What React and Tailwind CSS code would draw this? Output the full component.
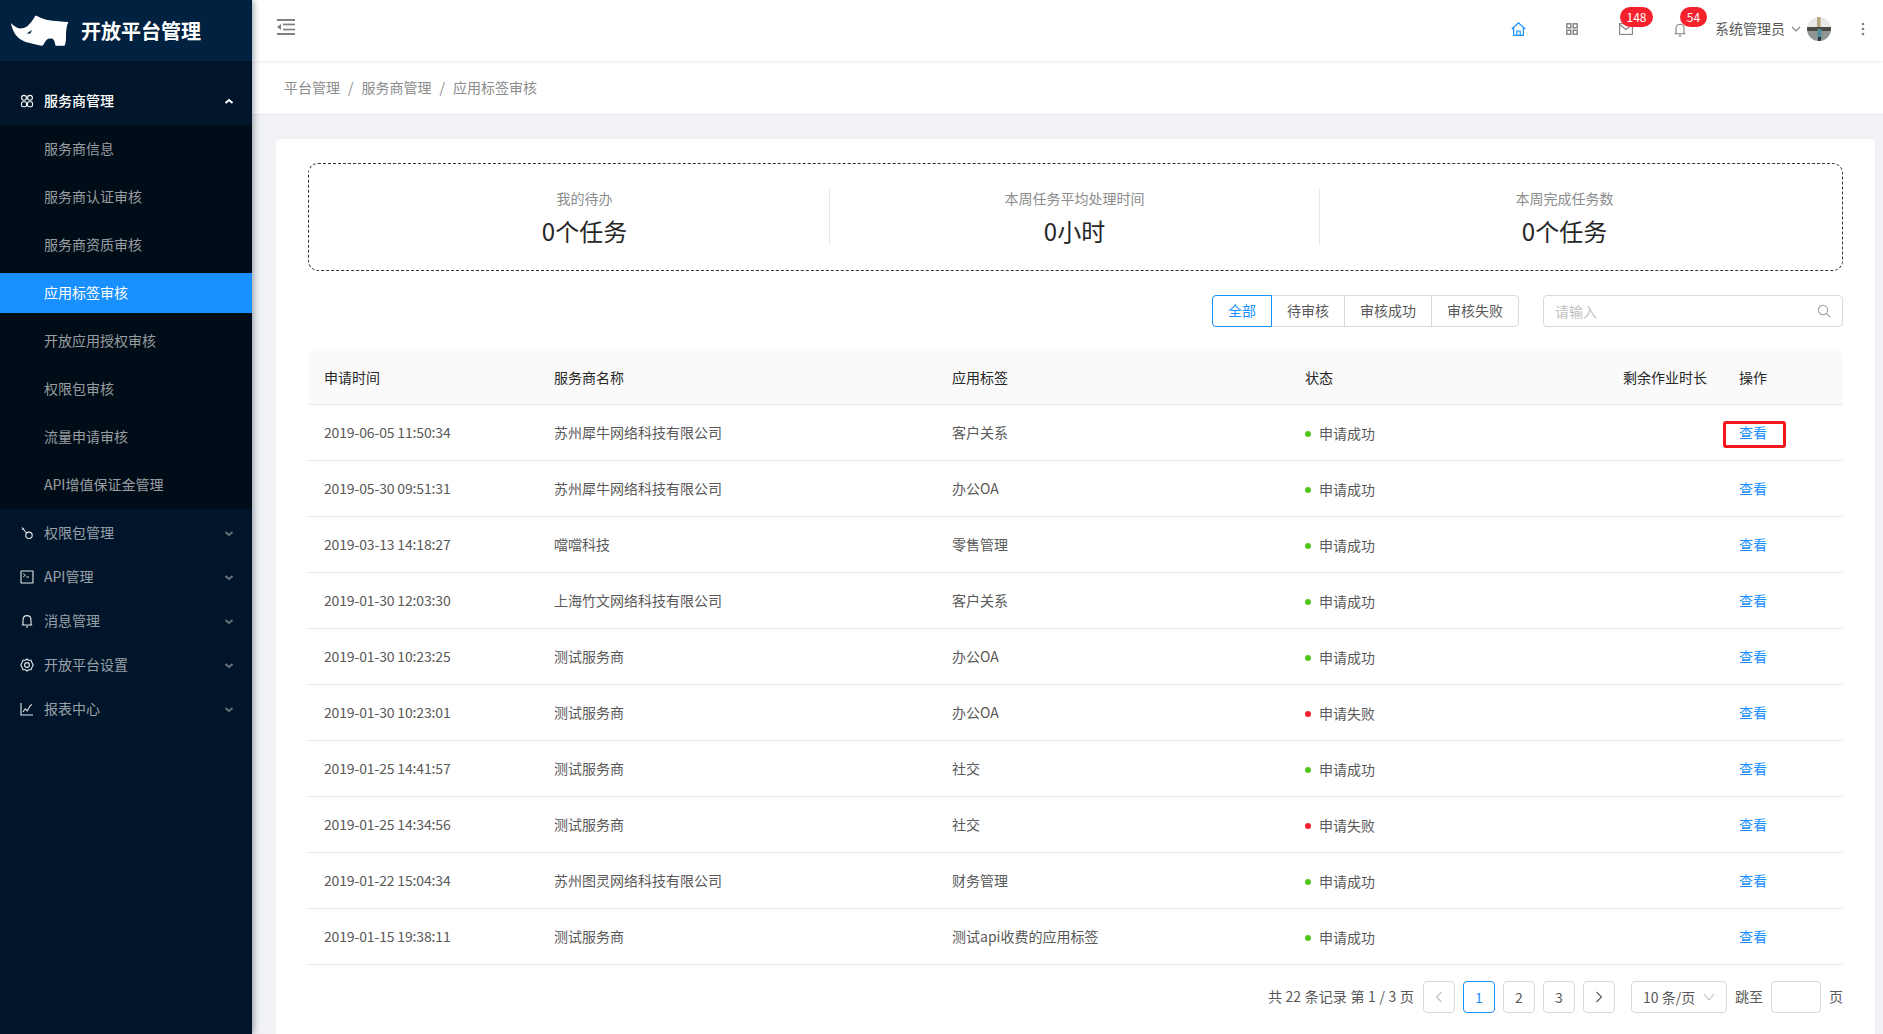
import React from "react";

const sub = ["服务商信息", "服务商认证审核", "服务商资质审核", "应用标签审核", "开放应用授权审核", "权限包审核", "流量申请审核", "API增值保证金管理"];

const rows = [
  ["2019-06-05 11:50:34", "苏州犀牛网络科技有限公司", "客户关系", true],
  ["2019-05-30 09:51:31", "苏州犀牛网络科技有限公司", "办公OA", true],
  ["2019-03-13 14:18:27", "噹噹科技", "零售管理", true],
  ["2019-01-30 12:03:30", "上海竹文网络科技有限公司", "客户关系", true],
  ["2019-01-30 10:23:25", "测试服务商", "办公OA", true],
  ["2019-01-30 10:23:01", "测试服务商", "办公OA", false],
  ["2019-01-25 14:41:57", "测试服务商", "社交", true],
  ["2019-01-25 14:34:56", "测试服务商", "社交", false],
  ["2019-01-22 15:04:34", "苏州图灵网络科技有限公司", "财务管理", true],
  ["2019-01-15 19:38:11", "测试服务商", "测试api收费的应用标签", true],
];

const Ico = ({ children, className = "", size = 14, vb = "0 0 14 14" }) => (
  <svg width={size} height={size} viewBox={vb} fill="none" stroke="currentColor" strokeWidth="1.1" className={className}>
    {children}
  </svg>
);

const Chevron = ({ up, className = "" }) => (
  <svg width="10" height="7" viewBox="0 0 10 7" fill="none" stroke="currentColor" strokeWidth="2" className={className}>
    <path d={up ? "M1.5 5 L5 2 L8.5 5" : "M1.5 2 L5 5 L8.5 2"} />
  </svg>
);

const Logo = () => (
  <svg width="58" height="33" viewBox="11 14 58 33" className="shrink-0">
    <path
      fill="#fff"
      d="M11 23 C13 25 16 28 20 28.5 C23 28.5 25 27.5 27 26.5 C30 24 33 20 35.5 15.5 C38 16.5 41 18 44 19 C48 20.5 54 21 68.5 22 C66.5 25 66 32 66 37 C66 41 65.5 44 64.5 45.8 L55.5 45.8 C55 42 54 39 51.5 38.5 C48 38 46 40 45 42 C44 44 43.5 45 42 45.8 C38 45 34 44.5 29 42.8 C22 41.5 16 37 13.5 31 C12 28 11.3 25 11 23 Z"
    />
    <path fill="#002140" d="M26.5 33.5 L32 30 L30.5 33.5 Z" />
  </svg>
);

const GroupIcons = {
  apps: (
    <Ico>
      <circle cx="4" cy="3.8" r="2.4" />
      <circle cx="10" cy="3.8" r="2.4" />
      <rect x="1.5" y="7.8" width="5" height="5" rx="1.6" />
      <rect x="7.5" y="7.8" width="5" height="5" rx="1.6" />
    </Ico>
  ),
  key: (
    <Ico>
      <circle cx="9" cy="9.3" r="3.2" />
      <path d="M6.6 7 L2 1.5 M2.2 3.6 L3.8 2.4" />
    </Ico>
  ),
  code: (
    <Ico>
      <rect x="1" y="1" width="12" height="12" rx="0.6" />
      <path d="M3.2 3.6 L5.3 5.3 L3.2 7 M6.3 7 L9 7" strokeWidth="0.9" />
    </Ico>
  ),
  bell: (
    <Ico>
      <path d="M3 11 L3 6 C3 3.4 4.8 1.6 7 1.6 C9.2 1.6 11 3.4 11 6 L11 11 M1.8 11 L12.2 11" />
      <circle cx="7" cy="12.8" r="0.9" fill="currentColor" stroke="none" />
    </Ico>
  ),
  gear: (
    <Ico>
      <path d="M7 1 L8.6 2.2 L11 2.2 L11.9 4.4 L13.2 7 L11.9 9.6 L11 11.8 L8.6 11.8 L7 13 L5.4 11.8 L3 11.8 L2.1 9.6 L0.8 7 L2.1 4.4 L3 2.2 L5.4 2.2 Z" />
      <circle cx="7" cy="7" r="2.4" />
    </Ico>
  ),
  chart: (
    <Ico>
      <path d="M1 1 L1 13 L13 13" />
      <path d="M3 10 L5.3 6.8 L7.2 8.8 L10 4 L11.8 2.4" />
    </Ico>
  ),
};

function Sidebar() {
  const groups = [
    ["key", "权限包管理"],
    ["code", "API管理"],
    ["bell", "消息管理"],
    ["gear", "开放平台设置"],
    ["chart", "报表中心"],
  ];
  return (
    <aside className="w-[252px] shrink-0 bg-[#001529] relative z-20 shadow-[2px_0_6px_rgba(0,21,41,0.35)] h-full">
      <div className="h-[61px] bg-[#002140] flex items-center pl-[11px]">
        <Logo />
        <span className="ml-[12px] mt-[1px] text-[20px] font-bold text-white leading-none">开放平台管理</span>
      </div>
      <div className="h-[64px] pt-4 pl-[20px] pr-[18px] flex items-center text-white">
        <span className="w-[24px] flex">{GroupIcons.apps}</span>
        <span className="flex-1 text-sm font-medium pb-[2px]">服务商管理</span>
        <Chevron up />
      </div>
      <div className="bg-[#000c17] py-1">
        {sub.map((s, i) => (
          <div
            key={s}
            className={`h-10 mb-2 last:mb-0 flex items-center pl-[44px] pb-[2px] text-sm ${i === 3 ? "bg-[#1890ff] text-white" : "text-white/60"}`}
          >
            {s}
          </div>
        ))}
      </div>
      <div className="mt-1">
        {groups.map(([k, t]) => (
          <div key={t} className="h-10 mb-1 flex items-center pl-[20px] pr-[18px] text-white/60">
            <span className="w-[24px] flex text-white/90">{GroupIcons[k]}</span>
            <span className="flex-1 text-sm pb-[2px]">{t}</span>
            <Chevron className="text-white/40" />
          </div>
        ))}
      </div>
    </aside>
  );
}

const Badge = ({ children, className }) => (
  <span className={`absolute top-[7px] h-5 rounded-[10px] bg-[#f5222d] text-white text-xs leading-[19px] text-center ${className}`}>{children}</span>
);

function Header() {
  return (
    <header className="h-[61px] shrink-0 bg-white relative z-10 shadow-[0_1px_4px_rgba(0,21,41,0.08)] flex items-center justify-between pb-[3px] pl-[25px] pr-[18px]">
      <svg width="18" height="16" viewBox="0 0 18 16" className="text-[#808080] -mt-[4px]" fill="currentColor">
        <rect x="0" y="0" width="18" height="2" />
        <rect x="0" y="14" width="18" height="2" />
        <rect x="6" y="4.6" width="12" height="1.7" />
        <rect x="6" y="9.7" width="12" height="1.7" />
        <path d="M0 8 L4 5 L4 11 Z" />
      </svg>
      <div className="flex items-center text-[#808080]">
        <div className="w-[54px] flex justify-center text-[#1890ff]">
          <svg width="15" height="14" viewBox="0 0 15 14" fill="none" stroke="currentColor" strokeWidth="1.2">
            <path d="M0.8 7 L7.5 0.8 L14.2 7 M2.6 5.8 L2.6 13.4 L12.4 13.4 L12.4 5.8 M5.8 13.4 L5.8 9 L9.2 9 L9.2 13.4" />
          </svg>
        </div>
        <div className="w-[54px] flex justify-center">
          <svg width="12" height="12" viewBox="0 0 12 12" fill="none" stroke="currentColor" strokeWidth="1.4">
            <rect x="0.8" y="0.8" width="4" height="4" />
            <rect x="7.2" y="0.8" width="4" height="4" />
            <rect x="0.8" y="7.2" width="4" height="4" />
            <rect x="7.2" y="7.2" width="4" height="4" />
          </svg>
        </div>
        <div className="w-[54px] flex justify-center">
          <svg width="14" height="12" viewBox="0 0 14 12" fill="none" stroke="currentColor" strokeWidth="1.1">
            <rect x="0.6" y="0.6" width="12.8" height="10.8" />
            <path d="M0.6 1.5 L7 6.5 L13.4 1.5" />
          </svg>
        </div>
        <div className="w-[54px] flex justify-center pt-[1px]">
          <svg width="12" height="14" viewBox="0 0 12 14" fill="none" stroke="currentColor" strokeWidth="1.1">
            <path d="M2 10.8 L2 5.5 C2 3 3.8 1.2 6 1.2 C8.2 1.2 10 3 10 5.5 L10 10.8 M0.5 10.8 L11.5 10.8" />
            <circle cx="6" cy="12.7" r="1" fill="currentColor" stroke="none" />
          </svg>
        </div>
        <span className="ml-2 text-sm text-[#595959] pb-[2px]">系统管理员</span>
        <svg width="10" height="6" viewBox="0 0 10 6" fill="none" stroke="currentColor" strokeWidth="1.1" className="ml-[6px]">
          <path d="M1 1 L5 5 L9 1" />
        </svg>
        <svg width="24" height="24" viewBox="0 0 24 24" className="ml-[6px] rounded-full">
          <rect width="24" height="24" fill="#e8eaea" />
          <rect x="10" y="0" width="3.5" height="11" fill="#b8a67c" />
          <rect y="10" width="24" height="4" fill="#4a4a45" />
          <rect y="14" width="24" height="10" fill="#8f9693" />
          <rect x="10.5" y="12" width="4" height="9" fill="#4f8f9f" />
          <rect x="11" y="20" width="3" height="4" fill="#2b3238" />
        </svg>
        <svg width="4" height="14" viewBox="0 0 4 14" fill="#808080" className="ml-[30px]">
          <circle cx="2" cy="2" r="1.3" />
          <circle cx="2" cy="7" r="1.3" />
          <circle cx="2" cy="12" r="1.3" />
        </svg>
      </div>
      <Badge className="left-[1368px] w-[33px]">148</Badge>
      <Badge className="left-[1428px] w-[27px]">54</Badge>
    </header>
  );
}

const Stat = ({ label, value, sep }) => (
  <div className={`flex-1 h-[56px] text-center ${sep ? "border-r border-[#e8e8e8]" : ""}`}>
    <div className="-mt-[2px] text-sm leading-[22px] text-[#8c8c8c]">{label}</div>
    <div className="mt-[6px] text-2xl leading-[32px] text-[#262626]">{value}</div>
  </div>
);

const Pg = ({ children, active, dim }) => (
  <div
    className={`w-[32px] h-8 rounded border flex items-center justify-center text-sm pb-[1px] ${
      active ? "border-[#1890ff] text-[#1890ff]" : dim ? "border-[#d9d9d9] text-[#bfbfbf]" : "border-[#d9d9d9] text-[#595959]"
    }`}
  >
    {children}
  </div>
);

const Arrow = ({ right }) => (
  <svg width="8" height="12" viewBox="0 0 8 12" fill="none" stroke="currentColor" strokeWidth="1.1">
    <path d={right ? "M1.5 1 L6.5 6 L1.5 11" : "M6.5 1 L1.5 6 L6.5 11"} />
  </svg>
);

function Table() {
  const th = "h-[54px] border-b border-[#e8e8e8] px-4 pb-[2px] text-left font-normal text-sm text-[#262626]";
  const td = "h-[56px] border-b border-[#e8e8e8] px-4 pb-[2px] text-sm text-[#595959]";
  return (
    <table className="mt-6 w-[1535px] table-fixed border-separate border-spacing-0">
      <colgroup>
        <col className="w-[230px]" />
        <col className="w-[398px]" />
        <col className="w-[353px]" />
        <col className="w-[318px]" />
        <col className="w-[116px]" />
        <col className="w-[120px]" />
      </colgroup>
      <thead>
        <tr className="bg-[#fafafa]">
          <th className={`${th} rounded-tl`}>申请时间</th>
          <th className={th}>服务商名称</th>
          <th className={th}>应用标签</th>
          <th className={th}>状态</th>
          <th className={th}>剩余作业时长</th>
          <th className={`${th} rounded-tr`}>操作</th>
        </tr>
      </thead>
      <tbody>
        {rows.map((r, i) => (
          <tr key={i}>
            <td className={`${td} tracking-[-0.15px]`}>{r[0]}</td>
            <td className={td}>{r[1]}</td>
            <td className={td}>{r[2]}</td>
            <td className={td}>
              <span className="flex items-center pt-[2px]">
                <span className={`w-[6px] h-[6px] mt-[2px] rounded-full ${r[3] ? "bg-[#52c41a]" : "bg-[#f5222d]"}`} />
                <span className="ml-2">{r[3] ? "申请成功" : "申请失败"}</span>
              </span>
            </td>
            <td className={td}></td>
            <td className={td}>
              <span className="relative inline-block leading-[22px] text-[#1890ff]">
                查看
                {i === 0 && (
                  <span className="absolute -left-[16px] -right-[19px] top-0 -bottom-[5px] border-[3px] border-[#f5171c] rounded-[3px]" />
                )}
              </span>
            </td>
          </tr>
        ))}
      </tbody>
    </table>
  );
}

export default function App() {
  return (
    <div
      className="flex h-[1034px] w-[1883px] overflow-hidden bg-[#f0f2f5]"
      style={{ fontFamily: '"Noto Sans CJK SC", "Noto Sans", sans-serif' }}
    >
      <Sidebar />
      <div className="flex-1 min-w-0 flex flex-col">
        <Header />
        <div className="h-[54px] shrink-0 bg-white border-b border-[#e8e8e8] flex items-center pl-[32px] pb-[2px] text-sm text-[#8c8c8c]">
          <span>平台管理</span>
          <span className="mx-2">/</span>
          <span>服务商管理</span>
          <span className="mx-2">/</span>
          <span>应用标签审核</span>
        </div>
        <main className="flex-1 min-h-0 pt-6 pl-6 pr-2">
          <div className="h-full bg-white rounded-t px-8 pt-6">
            <div className="h-[108px] border border-dashed border-[#333] rounded-[10px] flex items-center pl-[31px] pr-[33px]">
              <Stat label="我的待办" value="0个任务" sep />
              <Stat label="本周任务平均处理时间" value="0小时" sep />
              <Stat label="本周完成任务数" value="0个任务" />
            </div>
            <div className="mt-6 flex justify-end">
              <div className="flex text-sm text-[#595959]">
                <div className="h-8 px-[15px] pb-[2px] border border-[#1890ff] rounded-l text-[#1890ff] flex items-center relative z-10">全部</div>
                <div className="h-8 px-[15px] pb-[2px] border border-[#d9d9d9] -ml-px flex items-center">待审核</div>
                <div className="h-8 px-[15px] pb-[2px] border border-[#d9d9d9] -ml-px flex items-center">审核成功</div>
                <div className="h-8 px-[15px] pb-[2px] border border-[#d9d9d9] -ml-px rounded-r flex items-center">审核失败</div>
              </div>
              <div className="ml-6 w-[300px] h-8 border border-[#d9d9d9] rounded flex items-center justify-between pl-[11px] pr-[11px] text-sm text-[#bfbfbf]">
                <span>请输入</span>
                <svg width="14" height="14" viewBox="0 0 14 14" fill="none" stroke="#a6a6a6" strokeWidth="1.2">
                  <circle cx="6" cy="6" r="4.6" />
                  <path d="M9.4 9.4 L13 13" />
                </svg>
              </div>
            </div>
            <Table />
            <div className="mt-4 flex items-center justify-end text-sm text-[#595959]">
              <span className="mr-[9px] -mt-[2px] [word-spacing:0.5px]">共 22 条记录 第 1 / 3 页</span>
              <div className="flex gap-2">
                <Pg dim><Arrow /></Pg>
                <Pg active>1</Pg>
                <Pg>2</Pg>
                <Pg>3</Pg>
                <Pg><Arrow right /></Pg>
              </div>
              <div className="ml-4 w-[96px] h-8 border border-[#d9d9d9] rounded flex items-center justify-between pl-[11px] pr-[11px] pb-[1px]">
                <span>10 条/页</span>
                <svg width="12" height="8" viewBox="0 0 12 8" fill="none" stroke="#bfbfbf" strokeWidth="1.1">
                  <path d="M1 1 L6 7 L11 1" />
                </svg>
              </div>
              <span className="ml-2 -mt-[2px]">跳至</span>
              <div className="ml-2 w-[50px] h-8 border border-[#d9d9d9] rounded" />
              <span className="ml-2 -mt-[2px]">页</span>
            </div>
          </div>
        </main>
      </div>
    </div>
  );
}
